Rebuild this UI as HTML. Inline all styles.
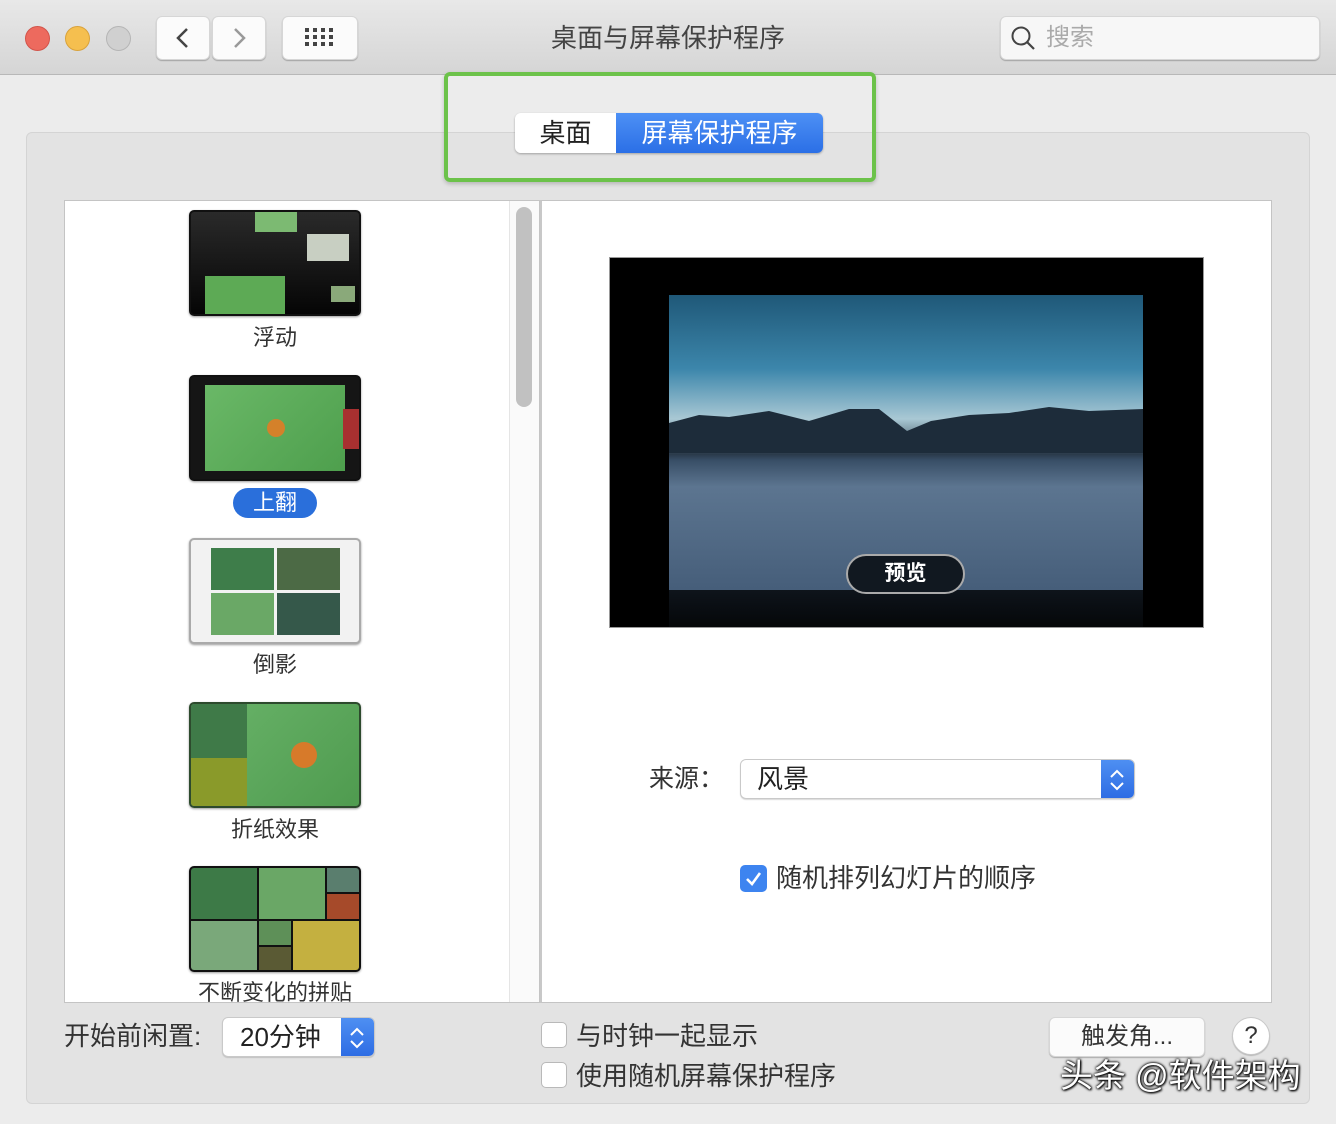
<!DOCTYPE html>
<html><head><meta charset="utf-8"><style>
*{margin:0;padding:0;box-sizing:border-box}
body{width:1336px;height:1124px;background:#ececec;font-family:"Liberation Sans","Noto Sans CJK SC",sans-serif;position:relative;overflow:hidden;color:#222}
.a{position:absolute}
.tb{left:0;top:0;width:1336px;height:75px;background:linear-gradient(#e8e8e8,#d5d5d5);border-bottom:1px solid #b8b8b8}
.dot{width:25px;height:25px;border-radius:50%;top:26px}
.btn{background:#fbfbfb;border-radius:6px;box-shadow:0 1px 1px rgba(0,0,0,.25);border:1px solid #d6d6d6}
.thumb{left:189px;width:172px;height:106px;border-radius:5px;border:2px solid #111;overflow:hidden;box-shadow:0 1px 2px rgba(0,0,0,.4)}
.lbl{left:140px;width:270px;text-align:center;font-size:22px;color:#333;line-height:26px}
.cb{width:26px;height:26px;border-radius:5px;background:#fff;border:1px solid #b9b9b9}
.t{line-height:30px}
</style></head><body>
<div class="a tb"></div>
<div class="a dot" style="left:25px;background:#ed6a5e;border:1px solid #d2544a"></div>
<div class="a dot" style="left:65px;background:#f5bf4f;border:1px solid #d9a23b"></div>
<div class="a dot" style="left:106px;background:#d0d0d0;border:1px solid #b5b5b5"></div>
<div class="a btn" style="left:156px;top:16px;width:54px;height:44px"></div>
<div class="a btn" style="left:212px;top:16px;width:54px;height:44px"></div>
<svg class="a" style="left:172px;top:26px" width="22" height="24"><path d="M15 3 L6 12 L15 21" stroke="#444" stroke-width="2.5" fill="none"/></svg>
<svg class="a" style="left:228px;top:26px" width="22" height="24"><path d="M7 3 L16 12 L7 21" stroke="#999" stroke-width="2.5" fill="none"/></svg>
<div class="a btn" style="left:282px;top:16px;width:76px;height:44px"></div>
<svg class="a" style="left:305px;top:28px" width="30" height="20"><g fill="#444"><rect x="0" y="0" width="4" height="4"/><rect x="8" y="0" width="4" height="4"/><rect x="16" y="0" width="4" height="4"/><rect x="24" y="0" width="4" height="4"/><rect x="0" y="7" width="4" height="4"/><rect x="8" y="7" width="4" height="4"/><rect x="16" y="7" width="4" height="4"/><rect x="24" y="7" width="4" height="4"/><rect x="0" y="14" width="4" height="4"/><rect x="8" y="14" width="4" height="4"/><rect x="16" y="14" width="4" height="4"/><rect x="24" y="14" width="4" height="4"/></g></svg>
<div class="a t" style="left:500px;top:23px;width:336px;text-align:center;font-size:26px;color:#444">桌面与屏幕保护程序</div>
<div class="a btn" style="left:1000px;top:16px;width:320px;height:44px;background:#f7f7f7"></div>
<svg class="a" style="left:1010px;top:25px" width="28" height="28"><circle cx="11" cy="11" r="8.5" stroke="#444" stroke-width="2" fill="none"/><path d="M17 17 L24 24" stroke="#444" stroke-width="2.2"/></svg>
<div class="a t" style="left:1046px;top:23px;font-size:24px;color:#aaa">搜索</div>

<div class="a" style="left:26px;top:132px;width:1284px;height:972px;background:#e3e3e3;border:1px solid #d4d4d4;border-radius:6px"></div>
<div class="a" style="left:444px;top:72px;width:432px;height:110px;border:4px solid #6cc24a;border-radius:6px;box-shadow:0 2px 4px rgba(0,0,0,.2)"></div>
<div class="a" style="left:515px;top:113px;width:308px;height:40px;border-radius:6px;overflow:hidden;box-shadow:0 1px 2px rgba(0,0,0,.3);display:flex;font-size:26px">
<div style="width:101px;background:#fff;color:#222;text-align:center;line-height:40px">桌面</div>
<div style="flex:1;background:linear-gradient(#4d90f5,#2b6fe6);color:#fff;text-align:center;line-height:40px">屏幕保护程序</div></div>

<div class="a" style="left:64px;top:200px;width:476px;height:803px;background:#fff;border:1px solid #c4c4c4"></div>
<div class="a" style="left:509px;top:201px;width:30px;height:801px;background:#fafafa;border-left:1px solid #e5e5e5"></div>
<div class="a" style="left:516px;top:207px;width:16px;height:200px;background:#c1c1c1;border-radius:8px"></div>
<div class="a" style="left:540px;top:200px;width:732px;height:803px;background:#fff;border:1px solid #c4c4c4;border-left:2px solid #c8c8c8"></div>

<div class="a thumb" style="top:210px;background:linear-gradient(#2a2a2a,#050505)">
<div class="a" style="left:64px;top:0;width:42px;height:20px;background:#7cba72"></div>
<div class="a" style="left:116px;top:22px;width:42px;height:27px;background:#c8cfc2"></div>
<div class="a" style="left:14px;top:64px;width:80px;height:40px;background:#5daa55"></div>
<div class="a" style="left:140px;top:74px;width:24px;height:16px;background:#8aa97a"></div>
</div>
<div class="a lbl" style="top:325px">浮动</div>
<div class="a thumb" style="top:375px;background:#151515">
<div class="a" style="left:14px;top:8px;width:140px;height:86px;background:linear-gradient(135deg,#6ab867,#4e9f4d)"></div>
<div class="a" style="left:152px;top:32px;width:16px;height:40px;background:#a83030"></div>
<div class="a" style="left:76px;top:42px;width:18px;height:18px;border-radius:50%;background:#d4812a"></div>
</div>
<div class="a" style="left:233px;top:488px;width:84px;height:30px;border-radius:15px;background:#2a6fdb;color:#fff;font-size:22px;text-align:center;line-height:30px">上翻</div>
<div class="a thumb" style="top:538px;background:#f2f2f2;border:2px solid #aaa">
<div class="a" style="left:20px;top:8px;width:63px;height:42px;background:#3e7d4a"></div>
<div class="a" style="left:86px;top:8px;width:63px;height:42px;background:#4c6a45"></div>
<div class="a" style="left:20px;top:53px;width:63px;height:42px;background:#6aa866"></div>
<div class="a" style="left:86px;top:53px;width:63px;height:42px;background:#35584a"></div>
</div>
<div class="a lbl" style="top:652px">倒影</div>
<div class="a thumb" style="top:702px;border-color:#2d4a2d;background:linear-gradient(135deg,#6ab46a,#4f9b4f)">
<div class="a" style="left:0;top:0;width:56px;height:54px;background:#3f7a48"></div>
<div class="a" style="left:0;top:54px;width:56px;height:50px;background:#8a9a2a"></div>
<div class="a" style="left:100px;top:38px;width:26px;height:26px;border-radius:50%;background:#d77a2a"></div>
</div>
<div class="a lbl" style="top:817px">折纸效果</div>
<div class="a thumb" style="top:866px;background:#111">
<div class="a" style="left:0;top:0;width:66px;height:51px;background:#3d7a47"></div>
<div class="a" style="left:68px;top:0;width:66px;height:51px;background:#6aa766"></div>
<div class="a" style="left:136px;top:0;width:34px;height:24px;background:#5a7e6e"></div>
<div class="a" style="left:136px;top:26px;width:34px;height:25px;background:#a64a2a"></div>
<div class="a" style="left:0;top:53px;width:66px;height:51px;background:#7aa87a"></div>
<div class="a" style="left:68px;top:53px;width:32px;height:24px;background:#5e9058"></div>
<div class="a" style="left:68px;top:79px;width:32px;height:25px;background:#5a5a34"></div>
<div class="a" style="left:102px;top:53px;width:68px;height:51px;background:#c4b040"></div>
</div>
<div class="a lbl" style="top:980px;height:22px;overflow:hidden">不断变化的拼贴</div>

<div class="a" style="left:609px;top:257px;width:595px;height:371px;background:#000;border:1px solid #999"></div>
<div class="a" style="left:669px;top:295px;width:474px;height:295px;overflow:hidden;background:linear-gradient(#1f5878 0%,#3c86ab 25%,#a9c8d4 42%,#2a3a4a 54%,#384e66 56%,#5c7590 65%,#465e7a 100%)">
<svg class="a" style="left:0;top:108px" width="474" height="60"><path d="M0 20 L30 12 L60 14 L100 8 L140 18 L180 6 L210 6 L238 28 L262 18 L300 12 L340 10 L380 4 L420 8 L474 6 L474 50 L0 50Z" fill="#1d2c3a"/></svg>
</div>
<div class="a" style="left:669px;top:590px;width:474px;height:37px;background:linear-gradient(#0e141b,#050709)"></div>
<div class="a" style="left:846px;top:554px;width:119px;height:40px;border-radius:20px;background:#111820;border:2px solid #aaa;color:#fff;font-size:21px;font-weight:bold;text-align:center;line-height:36px">预览</div>

<div class="a t" style="left:649px;top:764px;font-size:25px;color:#333">来源：</div>
<div class="a" style="left:740px;top:759px;width:395px;height:40px;background:#fff;border:1px solid #c9c9c9;border-radius:6px;box-shadow:0 1px 1px rgba(0,0,0,.15);overflow:hidden">
<div class="a" style="left:16px;top:4px;font-size:26px;line-height:30px">风景</div>
<div class="a" style="right:0;top:0;width:33px;height:40px;background:linear-gradient(#4e8ff2,#2c6be3)"></div>
<svg class="a" style="right:8px;top:8px" width="18" height="24"><path d="M3 9 L9 3 L15 9 M3 15 L9 21 L15 15" stroke="#fff" stroke-width="2" fill="none"/></svg>
</div>
<div class="a" style="left:740px;top:865px;width:27px;height:27px;border-radius:5px;background:#3d84f0"></div>
<svg class="a" style="left:740px;top:865px" width="27" height="27"><path d="M7 14 L12 19 L20 8" stroke="#fff" stroke-width="2.6" fill="none"/></svg>
<div class="a t" style="left:776px;top:863px;font-size:26px;color:#333">随机排列幻灯片的顺序</div>

<div class="a t" style="left:64px;top:1021px;font-size:26px;color:#333">开始前闲置:</div>
<div class="a" style="left:222px;top:1017px;width:153px;height:40px;background:#fff;border:1px solid #c9c9c9;border-radius:6px;box-shadow:0 1px 1px rgba(0,0,0,.15);overflow:hidden">
<div class="a" style="left:17px;top:4px;font-size:26px;line-height:30px">20分钟</div>
<div class="a" style="right:0;top:0;width:33px;height:40px;background:linear-gradient(#4e8ff2,#2c6be3)"></div>
<svg class="a" style="right:8px;top:8px" width="18" height="24"><path d="M3 9 L9 3 L15 9 M3 15 L9 21 L15 15" stroke="#fff" stroke-width="2" fill="none"/></svg>
</div>
<div class="a cb" style="left:541px;top:1022px"></div>
<div class="a t" style="left:576px;top:1021px;font-size:26px;color:#333">与时钟一起显示</div>
<div class="a cb" style="left:541px;top:1062px"></div>
<div class="a t" style="left:576px;top:1061px;font-size:26px;color:#333">使用随机屏幕保护程序</div>
<div class="a btn" style="left:1049px;top:1017px;width:156px;height:40px;text-align:center;font-size:24px;line-height:38px;color:#333">触发角...</div>
<div class="a" style="left:1232px;top:1017px;width:38px;height:38px;border-radius:50%;background:#fff;border:1px solid #c9c9c9;box-shadow:0 1px 1px rgba(0,0,0,.2);text-align:center;font-size:24px;line-height:36px;color:#333">?</div>
<div class="a" style="left:1060px;top:1056px;font-size:33px;line-height:40px;color:#fff;text-shadow:0 0 3px #000,0 0 2px #000,1px 1px 2px #000">头条 @软件架构</div>
</body></html>
